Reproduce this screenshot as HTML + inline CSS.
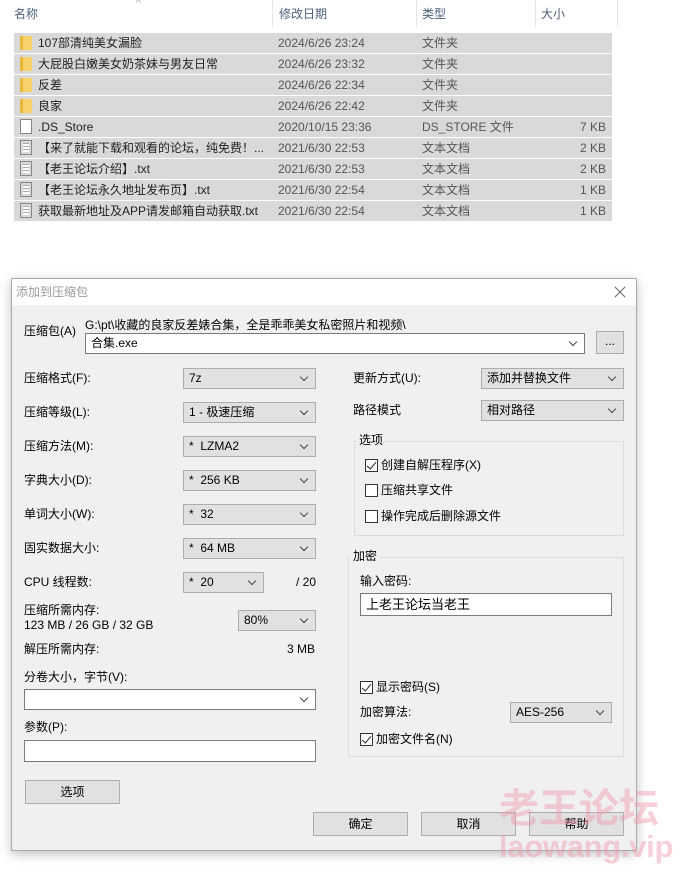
<!DOCTYPE html>
<html><head><meta charset="utf-8"><style>
*{margin:0;padding:0;box-sizing:border-box}
body{width:686px;height:874px;background:#fff;position:relative;overflow:hidden;font-family:"Liberation Sans","Noto Sans CJK SC",sans-serif;font-size:12px;color:#000;line-height:15px}
.a{position:absolute;white-space:nowrap}
.hd{color:#4c607a;font-size:12px;top:7px}
.sep{position:absolute;top:0;width:1px;height:27px;background:#e5e5e5}
.row{position:absolute;left:14px;width:598px;height:20px;background:#d9d9d9}
.row span{position:absolute;top:0;line-height:20px;font-size:12px;color:#222}
.fold{position:absolute;left:6px;top:3px;width:12px;height:14px;background:#f7d26a;border-left:3px solid #e8b73c}
.doc{position:absolute;left:6px;top:2px;width:12px;height:15px;border:1px solid #888;background:#fff}
.doc.t{background:repeating-linear-gradient(#fff 0 2px,#aaa 2px 3px);background-clip:content-box;padding:2px}
.dlg{position:absolute;left:11px;top:278px;width:626px;height:573px;background:#f0f0f0;border:1px solid #aaa;box-shadow:0 3px 10px rgba(0,0,0,.25)}
.tb{position:absolute;left:0;top:0;width:100%;height:26px;background:#fff}
.cb{position:absolute;height:21px;background:#e1e1e1;border:1px solid #adadad;font-size:12px;padding:0 0 0 5px;line-height:19px}
.cb.w{background:#fff;border-color:#7a7a7a}
.cb::after{content:"";position:absolute;right:8px;top:5px;width:5px;height:5px;border-right:1px solid #444;border-bottom:1px solid #444;transform:rotate(45deg)}
.cb.n::after{display:none}
.btn{position:absolute;height:24px;background:#e1e1e1;border:1px solid #adadad;text-align:center;line-height:22px;font-size:12px}
.grp{position:absolute;border:1px solid #dcdcdc}
.gt{position:absolute;background:#f0f0f0;padding:0 2px;top:-9px;left:2px}
.chk{position:absolute;width:13px;height:13px;border:1px solid #333;background:#fff}
.chk.c::after{content:"";position:absolute;left:3px;top:0px;width:4px;height:8px;border-right:1.5px solid #222;border-bottom:1.5px solid #222;transform:rotate(40deg)}
</style></head><body>
<div class="a" style="left:136px;top:-4px;color:#999;font-size:10px">^</div>
<div class="a hd" style="left:14px">名称</div>
<div class="sep" style="left:272px"></div>
<div class="a hd" style="left:279px">修改日期</div>
<div class="sep" style="left:416px"></div>
<div class="a hd" style="left:422px">类型</div>
<div class="sep" style="left:535px"></div>
<div class="a hd" style="left:541px">大小</div>
<div class="sep" style="left:617px"></div>

<div class="row" style="top:33px"><i class="fold"></i><span style="left:24px">107部清纯美女漏脸</span><span style="left:264px;color:#555">2024/6/26 23:24</span><span style="left:408px;color:#555">文件夹</span></div>
<div class="row" style="top:54px"><i class="fold"></i><span style="left:24px">大屁股白嫩美女奶茶妹与男友日常</span><span style="left:264px;color:#555">2024/6/26 23:32</span><span style="left:408px;color:#555">文件夹</span></div>
<div class="row" style="top:75px"><i class="fold"></i><span style="left:24px">反差</span><span style="left:264px;color:#555">2024/6/26 22:34</span><span style="left:408px;color:#555">文件夹</span></div>
<div class="row" style="top:96px"><i class="fold"></i><span style="left:24px">良家</span><span style="left:264px;color:#555">2024/6/26 22:42</span><span style="left:408px;color:#555">文件夹</span></div>
<div class="row" style="top:117px"><i class="doc"></i><span style="left:24px">.DS_Store</span><span style="left:264px;color:#555">2020/10/15 23:36</span><span style="left:408px;color:#555">DS_STORE 文件</span><span style="right:6px;color:#555">7 KB</span></div>
<div class="row" style="top:138px"><i class="doc t"></i><span style="left:24px">【来了就能下载和观看的论坛，纯免费！...</span><span style="left:264px;color:#555">2021/6/30 22:53</span><span style="left:408px;color:#555">文本文档</span><span style="right:6px;color:#555">2 KB</span></div>
<div class="row" style="top:159px"><i class="doc t"></i><span style="left:24px">【老王论坛介绍】.txt</span><span style="left:264px;color:#555">2021/6/30 22:53</span><span style="left:408px;color:#555">文本文档</span><span style="right:6px;color:#555">2 KB</span></div>
<div class="row" style="top:180px"><i class="doc t"></i><span style="left:24px">【老王论坛永久地址发布页】.txt</span><span style="left:264px;color:#555">2021/6/30 22:54</span><span style="left:408px;color:#555">文本文档</span><span style="right:6px;color:#555">1 KB</span></div>
<div class="row" style="top:201px"><i class="doc t"></i><span style="left:24px">获取最新地址及APP请发邮箱自动获取.txt</span><span style="left:264px;color:#555">2021/6/30 22:54</span><span style="left:408px;color:#555">文本文档</span><span style="right:6px;color:#555">1 KB</span></div>

<div class="dlg"><div class="tb"><span class="a" style="left:4px;top:6px;color:#999">添加到压缩包</span>
<svg class="a" style="right:10px;top:7px" width="12" height="12"><path d="M1 1L11 11M11 1L1 11" stroke="#666" stroke-width="1"/></svg></div></div>

<div class="a" style="left:24px;top:324px">压缩包(A)</div>
<div class="a" style="left:85px;top:318px">G:\pt\收藏的良家反差婊合集，全是乖乖美女私密照片和视频\</div>
<div class="cb w" style="left:85px;top:333px;width:500px;height:21px">合集.exe</div>
<div class="btn" style="left:596px;top:331px;width:28px;height:23px;line-height:19px">...</div>

<div class="a" style="left:24px;top:371px">压缩格式(F):</div><div class="cb" style="left:183px;top:368px;width:133px">7z</div>
<div class="a" style="left:24px;top:405px">压缩等级(L):</div><div class="cb" style="left:183px;top:402px;width:133px">1 - 极速压缩</div>
<div class="a" style="left:24px;top:439px">压缩方法(M):</div><div class="cb" style="left:183px;top:436px;width:133px">* &nbsp;LZMA2</div>
<div class="a" style="left:24px;top:473px">字典大小(D):</div><div class="cb" style="left:183px;top:470px;width:133px">* &nbsp;256 KB</div>
<div class="a" style="left:24px;top:507px">单词大小(W):</div><div class="cb" style="left:183px;top:504px;width:133px">* &nbsp;32</div>
<div class="a" style="left:24px;top:541px">固实数据大小:</div><div class="cb" style="left:183px;top:538px;width:133px">* &nbsp;64 MB</div>
<div class="a" style="left:24px;top:575px">CPU 线程数:</div><div class="cb" style="left:183px;top:572px;width:81px">* &nbsp;20</div><div class="a" style="left:296px;top:575px">/ 20</div>
<div class="a" style="left:24px;top:603px">压缩所需内存:</div><div class="a" style="left:24px;top:618px">123 MB / 26 GB / 32 GB</div><div class="cb" style="left:238px;top:610px;width:78px">80%</div>
<div class="a" style="left:24px;top:642px">解压所需内存:</div><div class="a" style="left:287px;top:642px">3 MB</div>
<div class="a" style="left:24px;top:670px">分卷大小，字节(V):</div><div class="cb w" style="left:24px;top:689px;width:292px"></div>
<div class="a" style="left:24px;top:720px">参数(P):</div><div class="cb w n" style="left:24px;top:740px;width:292px;height:22px"></div>
<div class="btn" style="left:25px;top:780px;width:95px">选项</div>

<div class="a" style="left:353px;top:371px">更新方式(U):</div><div class="cb" style="left:481px;top:368px;width:143px">添加并替换文件</div>
<div class="a" style="left:353px;top:403px">路径模式</div><div class="cb" style="left:481px;top:400px;width:143px">相对路径</div>

<div class="grp" style="left:354px;top:441px;width:270px;height:95px"><span class="gt">选项</span></div>
<div class="chk c" style="left:365px;top:459px"></div><div class="a" style="left:381px;top:458px">创建自解压程序(X)</div>
<div class="chk" style="left:365px;top:484px"></div><div class="a" style="left:381px;top:483px">压缩共享文件</div>
<div class="chk" style="left:365px;top:510px"></div><div class="a" style="left:381px;top:509px">操作完成后删除源文件</div>

<div class="grp" style="left:348px;top:557px;width:276px;height:200px"><span class="gt">加密</span></div>
<div class="a" style="left:360px;top:574px">输入密码:</div>
<div class="cb w n" style="left:360px;top:593px;width:252px;height:23px;font-size:13px;line-height:21px">上老王论坛当老王</div>
<div class="chk c" style="left:360px;top:681px"></div><div class="a" style="left:376px;top:680px">显示密码(S)</div>
<div class="a" style="left:360px;top:705px">加密算法:</div><div class="cb" style="left:510px;top:702px;width:102px">AES-256</div>
<div class="chk c" style="left:360px;top:733px"></div><div class="a" style="left:376px;top:732px">加密文件名(N)</div>

<div class="btn" style="left:313px;top:812px;width:95px">确定</div>
<div class="btn" style="left:421px;top:812px;width:95px">取消</div>
<div class="btn" style="left:529px;top:812px;width:95px">帮助</div>

<div class="a" style="left:499px;top:786px;font-size:40px;line-height:46px;font-weight:bold;color:rgba(240,150,170,.45)">老王论坛</div>
<div class="a" style="left:499px;top:829px;font-size:31px;line-height:36px;font-weight:bold;color:rgba(240,150,170,.45);letter-spacing:-0.3px">laowang.vip</div>
</body></html>
